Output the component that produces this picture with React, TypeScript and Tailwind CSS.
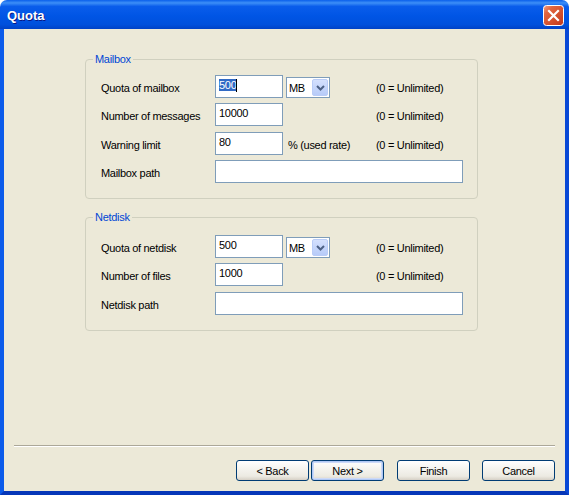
import React from "react";

const FONT = "font-['Liberation_Sans',Arial,sans-serif]";
const TXT = "text-[11px] tracking-[-0.3px] text-black";

function Box({
  w,
  children,
  className = "",
}: {
  w: string;
  children?: React.ReactNode;
  className?: string;
}) {
  return (
    <div
      className={`${w} h-full bg-white border border-[#7F9DB9] flex items-center pl-[3px] pb-[3px] ${TXT} ${className}`}
    >
      {children}
    </div>
  );
}

function Select() {
  return (
    <div className="ml-[3px] w-[44px] h-[21px] self-start mt-[2px] bg-white border border-[#7F9DB9] flex items-center justify-between pl-[2px] pr-[1px]">
      <span className={`${TXT} pt-[1px]`}>MB</span>
      <div className="w-[16px] h-[17px] rounded-[2px] border border-[#B9CCF7] bg-[linear-gradient(to_bottom,#D4E0FD,#B7CBF8)] flex items-center justify-center">
        <svg width="9" height="6" viewBox="0 0 9 6">
          <path d="M1 1 L4.5 4.5 L8 1" fill="none" stroke="#4D6185" strokeWidth="2" />
        </svg>
      </div>
    </div>
  );
}

function Label({ children }: { children: React.ReactNode }) {
  return <div className={`w-[114px] pt-[3px] ${TXT}`}>{children}</div>;
}

function Hint() {
  return <div className={`pt-[3px] ${TXT}`}>(0 = Unlimited)</div>;
}

function Group({
  title,
  className,
  children,
}: {
  title: string;
  className: string;
  children: React.ReactNode;
}) {
  return (
    <div
      className={`relative w-[393px] border border-[#D0D0BF] rounded-[4px] pl-[15px] ${className}`}
    >
      <span className="absolute -top-[8px] left-[7px] bg-[#ECE9D8] px-[2px] text-[11px] tracking-[-0.3px] leading-[14px] text-[#0046D5]">
        {title}
      </span>
      {children}
    </div>
  );
}

function Button({
  children,
  className = "",
  isDefault = false,
}: {
  children: React.ReactNode;
  className?: string;
  isDefault?: boolean;
}) {
  return (
    <div
      className={`w-[73px] h-[21px] rounded-[3px] border border-[#003C74] bg-[linear-gradient(to_bottom,#FFFFFF_0%,#F5F4EF_40%,#ECEAE2_80%,#D6D0C5_100%)] flex items-center justify-center pt-[1px] ${TXT} ${
        isDefault ? "shadow-[inset_0_0_0_1px_#B0C8F5,inset_0_0_0_2px_#CDDAF7]" : ""
      } ${className}`}
    >
      {children}
    </div>
  );
}

export default function App() {
  return (
    <div className={`w-[569px] h-[495px] flex flex-col bg-white ${FONT}`}>
      {/* Title bar */}
      <div className="h-[29px] rounded-t-[7px] bg-[linear-gradient(to_bottom,#0A5FEB_0%,#3D8FF7_10%,#0A5DEB_22%,#0055E5_55%,#0050DC_85%,#0042C6_100%)] flex items-center pl-[7px] pr-[5px]">
        <span className="text-white font-bold text-[13px] pt-[2px] [text-shadow:1px_1px_#0A1883]">
          Quota
        </span>
        <div className="ml-auto mt-[1px]">
          <svg width="21" height="21" viewBox="0 0 21 21">
            <defs>
              <linearGradient id="cl" x1="0" y1="0" x2="1" y2="1">
                <stop offset="0" stopColor="#F0A48A" />
                <stop offset="0.25" stopColor="#E2663F" />
                <stop offset="1" stopColor="#C2371A" />
              </linearGradient>
            </defs>
            <rect x="0.5" y="0.5" width="20" height="20" rx="3" fill="url(#cl)" stroke="#FFFFFF" />
            <path d="M6 6 L15 15 M15 6 L6 15" stroke="#FFFFFF" strokeWidth="2.2" strokeLinecap="square" />
          </svg>
        </div>
      </div>

      {/* Body */}
      <div className="flex-1 flex flex-col bg-[#ECE9D8] border-x-4 border-b-4 border-l-[#0B5BEA] border-r-[#0848D6] border-b-[#0637B8]">
        <Group title="Mailbox" className="ml-[81px] mt-[30px] h-[140px] pt-[15px]">
          <div className="flex items-center h-[23px]">
            <Label>Quota of mailbox</Label>
            <Box w="w-[68px]">
              <span className="bg-[#316AC5] text-white leading-[12px]">500</span>
              <span className="w-px h-[13px] bg-black" />
            </Box>
            <Select />
            <div className="ml-[46px]">
              <Hint />
            </div>
          </div>
          <div className="flex items-center h-[23px] mt-[5px]">
            <Label>Number of messages</Label>
            <Box w="w-[68px]">10000</Box>
            <div className="ml-[93px]">
              <Hint />
            </div>
          </div>
          <div className="flex items-center h-[23px] mt-[6px]">
            <Label>Warning limit</Label>
            <Box w="w-[68px]">80</Box>
            <div className={`w-[93px] pl-[5px] pt-[3px] ${TXT}`}>% (used rate)</div>
            <Hint />
          </div>
          <div className="flex items-center h-[23px] mt-[5px]">
            <Label>Mailbox path</Label>
            <Box w="w-[248px]" />
          </div>
        </Group>

        <Group title="Netdisk" className="ml-[81px] mt-[18px] h-[114px] pt-[17px]">
          <div className="flex items-center h-[23px]">
            <Label>Quota of netdisk</Label>
            <Box w="w-[68px]">500</Box>
            <Select />
            <div className="ml-[46px]">
              <Hint />
            </div>
          </div>
          <div className="flex items-center h-[23px] mt-[5px]">
            <Label>Number of files</Label>
            <Box w="w-[68px]">1000</Box>
            <div className="ml-[93px]">
              <Hint />
            </div>
          </div>
          <div className="flex items-center h-[23px] mt-[6px]">
            <Label>Netdisk path</Label>
            <Box w="w-[248px]" />
          </div>
        </Group>

        <div className="mt-auto mx-[10px] h-[2px] border-t border-t-[#ACA899] border-b border-b-white" />
        <div className="flex justify-end mx-[10px] mt-[13px] mb-[10px]">
          <Button>&lt; Back</Button>
          <Button className="ml-[2px]" isDefault>
            Next &gt;
          </Button>
          <Button className="ml-[13px]">Finish</Button>
          <Button className="ml-[12px]">Cancel</Button>
        </div>
      </div>
    </div>
  );
}
